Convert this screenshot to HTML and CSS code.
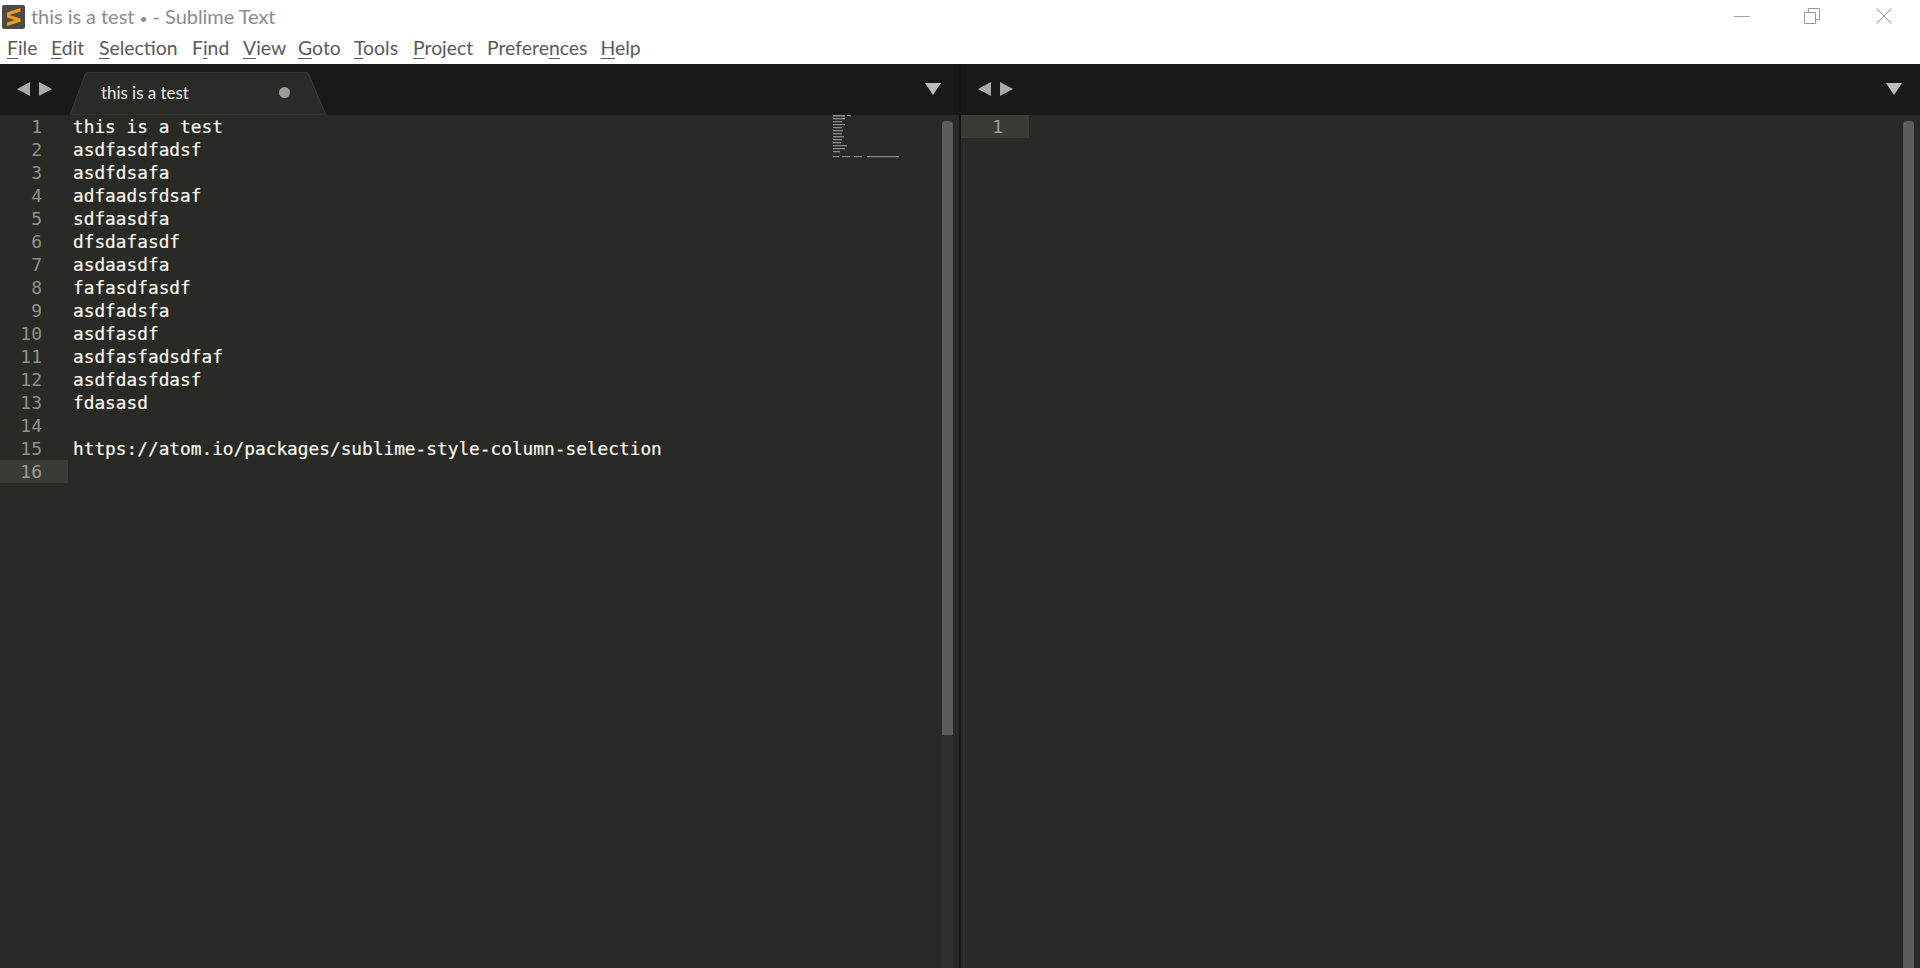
FILE: index.html
```html
<!DOCTYPE html>
<html lang="en">
<head>
<meta charset="utf-8">
<title>this is a test • - Sublime Text</title>
<link rel="stylesheet" href="styles.css">
</head>
<body>
<div class="app">
  <header class="chrome">
    <div class="titlebar">
      <svg class="logo" viewBox="0 0 23 24" width="23" height="24"><rect width="23" height="24" rx="2" fill="#4b4a48"/><path d="M5 10.8 18.5 6.4V3 L5 7.4ZM18.5 13.6 5 9.2V12.6L18.5 17ZM5 21 18.5 16.6V13.2L5 17.6Z" fill="#f49b1c"/></svg>
      <span class="title">this is a test <span class="bullet">•</span> - Sublime Text</span>
      <div class="winctl">
        <svg class="ctl ctl-min" viewBox="0 0 16 16" width="16" height="16"><path d="M0 8.5H16" stroke="#a5a5a5"/></svg>
        <svg class="ctl ctl-max" viewBox="0 0 16 16" width="16" height="16"><path d="M.5 4.5H11.5V15.5H.5ZM4.5 4.5V.5H15.5V11.5H11.5" fill="none" stroke="#999"/></svg>
        <svg class="ctl ctl-close" viewBox="0 0 16 16" width="16" height="16"><path d="M.5 .5 15.5 15.5M15.5 .5 .5 15.5" stroke="#999"/></svg>
      </div>
    </div>
    <nav class="menubar">
      <span class="menu m-file"><u>F</u>ile</span>
      <span class="menu m-edit"><u>E</u>dit</span>
      <span class="menu m-sel"><u>S</u>election</span>
      <span class="menu m-find">F<u>i</u>nd</span>
      <span class="menu m-view"><u>V</u>iew</span>
      <span class="menu m-goto"><u>G</u>oto</span>
      <span class="menu m-tools"><u>T</u>ools</span>
      <span class="menu m-proj"><u>P</u>roject</span>
      <span class="menu m-pref">Prefere<u>n</u>ces</span>
      <span class="menu m-help"><u>H</u>elp</span>
    </nav>
  </header>
  <main class="panes">
    <section class="pane pane-left">
      <div class="tabbar tabbar-left">
        <div class="arrows arrows-left">
          <svg viewBox="0 0 13 14" width="13" height="14"><path d="M13 0V14L0 7Z" fill="#a9a9a7"/></svg>
          <svg viewBox="0 0 13 14" width="13" height="14"><path d="M0 0V14L13 7Z" fill="#a9a9a7"/></svg>
        </div>
        <div class="tab">
          <svg class="tab-shape" viewBox="0 0 257 43" width="257" height="43"><path d="M0 43 15 3Q16 0 19 0H235Q238 0 239 3L256 43Z" fill="#2a2b26" stroke="#3b3c37"/></svg>
          <span class="tab-label">this is a test</span>
          <span class="tab-dot"></span>
        </div>
        <svg class="drop" viewBox="0 0 16 12" width="16" height="12"><path d="M0 0H16L8 12Z" fill="#bdbdbb"/></svg>
      </div>
      <div class="editor">
        <div class="gutter">
          <div class="ln">1</div><div class="ln">2</div><div class="ln">3</div><div class="ln">4</div>
          <div class="ln">5</div><div class="ln">6</div><div class="ln">7</div><div class="ln">8</div>
          <div class="ln">9</div><div class="ln">10</div><div class="ln">11</div><div class="ln">12</div>
          <div class="ln">13</div><div class="ln">14</div><div class="ln">15</div><div class="ln ln-active">16</div>
        </div>
        <div class="code">
          <div class="line">this is a test</div>
          <div class="line">asdfasdfadsf</div>
          <div class="line">asdfdsafa</div>
          <div class="line">adfaadsfdsaf</div>
          <div class="line">sdfaasdfa</div>
          <div class="line">dfsdafasdf</div>
          <div class="line">asdaasdfa</div>
          <div class="line">fafasdfasdf</div>
          <div class="line">asdfadsfa</div>
          <div class="line">asdfasdf</div>
          <div class="line">asdfasfadsdfaf</div>
          <div class="line">asdfdasfdasf</div>
          <div class="line">fdasasd</div>
          <div class="line">&nbsp;</div>
          <div class="line">https://atom.io/packages/sublime-style-column-selection</div>
          <div class="line">&nbsp;</div>
        </div>
        <svg class="minimap" viewBox="0 0 66 43" width="66" height="43" aria-hidden="true">
          <g fill="#a9a9a5" fill-opacity=".75">
            <rect x="0" y="0" width="12" height="1.6"/><rect x="14" y="0" width="4" height="1.2"/>
            <rect x="0" y="3" width="12" height="1.3"/><rect x="0" y="6" width="9" height="1.3"/>
            <rect x="0" y="9" width="12" height="1.3"/><rect x="0" y="12" width="9" height="1.3"/>
            <rect x="0" y="15" width="10" height="1.3"/><rect x="0" y="18" width="9" height="1.3"/>
            <rect x="0" y="21" width="11" height="1.3"/><rect x="0" y="24" width="9" height="1.3"/>
            <rect x="0" y="27" width="8" height="1.3"/><rect x="0" y="30" width="14" height="1.3"/>
            <rect x="0" y="33" width="12" height="1.3"/><rect x="0" y="36" width="7" height="1.3"/>
            <rect x="0" y="41" width="6" height="1.2"/><rect x="9" y="41" width="8" height="1.2"/>
            <rect x="21" y="41" width="8" height="1.2"/><rect x="34" y="41" width="32" height="1.2"/>
          </g>
        </svg>
        <div class="scroll scroll-left"><div class="thumb thumb-left"></div></div>
      </div>
    </section>
    <div class="divider"></div>
    <section class="pane pane-right">
      <div class="tabbar tabbar-right">
        <div class="arrows">
          <svg viewBox="0 0 13 14" width="13" height="14"><path d="M13 0V14L0 7Z" fill="#a9a9a7"/></svg>
          <svg viewBox="0 0 13 14" width="13" height="14"><path d="M0 0V14L13 7Z" fill="#a9a9a7"/></svg>
        </div>
        <svg class="drop" viewBox="0 0 16 12" width="16" height="12"><path d="M0 0H16L8 12Z" fill="#bdbdbb"/></svg>
      </div>
      <div class="editor">
        <div class="gutter">
          <div class="ln ln-active">1</div>
        </div>
        <div class="code"></div>
        <div class="scroll scroll-right"><div class="thumb thumb-right"></div></div>
      </div>
    </section>
  </main>
</div>
</body>
</html>
```

FILE: styles.css
```css
* { box-sizing: border-box; }
html, body { margin: 0; height: 100%; overflow: hidden; }
.app { display: flex; flex-direction: column; height: 100vh; background: #292a25; }
.chrome { height: 64px; background: #fff; flex: none; }
.titlebar { height: 34px; display: flex; align-items: center; padding-left: 2px; }
.logo { flex: none; }
.title { margin-left: 6px; font: 20px/24px Lato, "Open Sans", sans-serif; color: #8b8b8b; letter-spacing: -.05px; }
.bullet { font-size: 14px; }
.winctl { margin-left: auto; display: flex; align-items: center; height: 34px; margin-top: -2px; padding-right: 28px; }
.ctl { display: block; }
.ctl-max { margin-left: 54px; }
.ctl-close { margin-left: 56px; }
.menubar { height: 28px; display: flex; align-items: center; padding-left: 7px; font: 19.4px/28px Lato, "Open Sans", sans-serif; color: #5a5a5a; }
.menu { white-space: nowrap; }
.menu u { text-underline-offset: 3px; text-decoration-thickness: 1px; }
.m-file { width: 44px; } .m-edit { width: 48px; } .m-sel { width: 93px; } .m-find { width: 51px; }
.m-view { width: 55px; } .m-goto { width: 56px; } .m-tools { width: 59px; } .m-proj { width: 74px; }
.m-pref { width: 113.5px; }
.panes { flex: 1; display: flex; min-height: 0; }
.pane { display: flex; flex-direction: column; min-width: 0; }
.pane-left { width: 959px; flex: none; }
.pane-right { flex: 1; }
.divider { width: 2px; flex: none; background: #151611; }
.tabbar { height: 51px; flex: none; background: #191a15; display: flex; align-items: flex-start; }
.arrows { display: flex; gap: 9px; margin-top: 18px; margin-left: 17px; flex: none; }
.tab { position: relative; width: 257px; height: 43px; margin-top: 8px; margin-left: 18px; display: flex; align-items: center; flex: none; }
.tab-shape { position: absolute; left: 0; top: 0; }
.tab-label { position: relative; top: -1px; margin-left: 31px; width: 178px; font: 17px/22px Lato, "Open Sans", sans-serif; color: #e8e8e6; letter-spacing: -.05px; }
.tab-dot { position: relative; top: -1px; width: 11px; height: 11px; border-radius: 50%; background: #9c9c9a; flex: none; }
.drop { margin-left: auto; margin-top: 19px; flex: none; }
.tabbar-left .drop { margin-right: 18px; }
.tabbar-right .drop { margin-right: 18px; }
.editor { position: relative; flex: 1; display: flex; min-height: 0; background: #292a25; }
.gutter { width: 68px; flex: none; font: 18px/23px "DejaVu Sans Mono", monospace; color: #8f908a; text-align: right; }
.ln { padding-right: 26px; height: 23px; }
.ln-active { background: #3a3b34; color: #9a9b95; }
.code { flex: 1; min-width: 0; padding-left: 5px; font: 17.8px/23px "DejaVu Sans Mono", monospace; color: #f8f8f2; -webkit-text-stroke: .2px #f8f8f2; }
.line { height: 23px; white-space: pre; }
.minimap { position: absolute; left: 833px; top: 0; }
.scroll { width: 11px; flex: none; background: #30312c; margin-top: 6px; }
.scroll-left { margin-right: 6px; }
.scroll-right { margin-right: 6px; }
.thumb { width: 100%; background: #5b5c57; border-radius: 4px 4px 0 0; }
.thumb-left { height: 614px; }
.thumb-right { height: 100%; }
```
